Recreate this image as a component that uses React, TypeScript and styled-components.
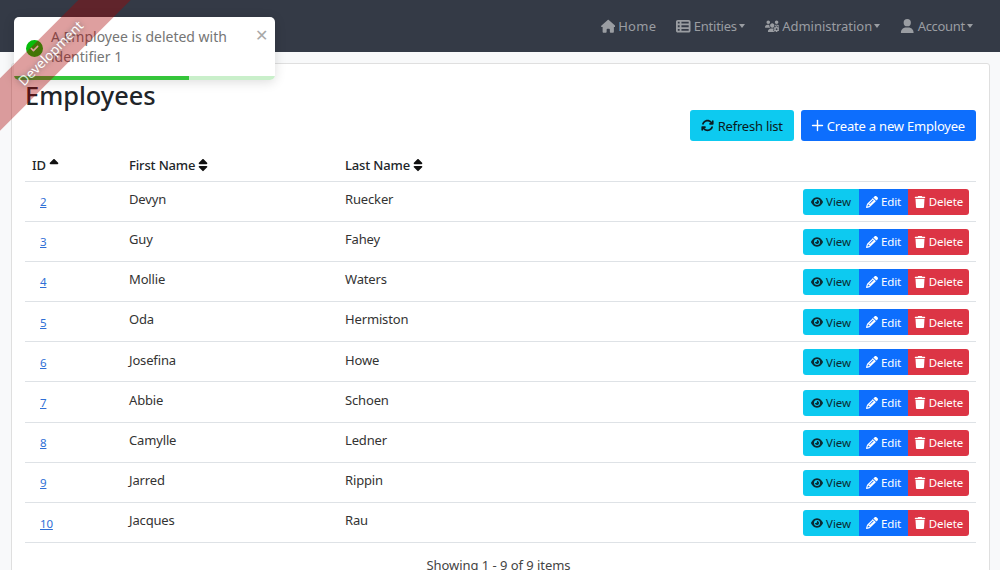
import React from 'react';
import styled, { createGlobalStyle } from 'styled-components';
import { FaHouse, FaTableList, FaUsersGear, FaUser, FaArrowsRotate, FaEye, FaPencil, FaTrash, FaSort, FaSortUp, FaCircleCheck } from 'react-icons/fa6';
import { Plus } from 'lucide-react';

const Global = createGlobalStyle`
  html, body { margin: 0; padding: 0; height: 570px; overflow: hidden; background: #f8f9fa; }
  body { font-family: "Noto Sans", "Open Sans", sans-serif; font-size: 13px; color: #212529; }
  * { box-sizing: border-box; }
`;
const Page = styled.div`position: relative; width: 1000px; height: 570px; overflow: hidden;`;
const Navbar = styled.nav`
  height: 52px; background: #343a46; display: flex; justify-content: flex-end; align-items: center;
  padding-right: 27px; gap: 20px;
`;
const NavItem = styled.span<{ $track?: number }>`
  display: flex; align-items: center; color: #9a9da2; font-size: 13px; letter-spacing: ${p => p.$track ?? 0}px;
  svg { margin-right: 3px; font-size: 14.5px; }
`;
const Caret = styled.i`
  display: inline-block; margin-left: 2px; border-top: 4px solid #9a9da2;
  border-left: 3.5px solid transparent; border-right: 3.5px solid transparent; border-bottom: 0;
`;
const Main = styled.main`padding: 11px 10px 0 11px;`;
const Card = styled.section`
  background: #fff; border: 1px solid #dfdfdf; border-radius: 3px; height: 560px; padding: 16px 13px 0 13px;
`;
const Header = styled.header`display: flex; justify-content: space-between; height: 61px;`;
const Title = styled.h2`margin: 0; font-size: 25.4px; font-weight: 500; line-height: 30px; color: #212529;`;
const Actions = styled.div`display: flex; gap: 7px; align-items: flex-end;`;
const Button = styled.button<{ $bg: string; $fg: string }>`
  height: 31px; border: 0; border-radius: 3px; padding: 0 11px; background: ${p => p.$bg}; color: ${p => p.$fg};
  display: flex; align-items: center; gap: 4px; font: inherit; font-size: 13px; letter-spacing: -0.2px;
  svg { font-size: 13px; flex: none; }
`;
const PlusIcon = styled(Plus)`margin: 0 -3px;`;
const Table = styled.table`
  width: 951px; margin-top: 8px; border-collapse: collapse; table-layout: fixed;
`;
const Th = styled.th<{ $w?: number }>`
  width: ${p => (p.$w ? `${p.$w}px` : 'auto')}; height: 32px; padding: 0 7px; text-align: left; font-weight: 500; font-size: 13px;
  letter-spacing: -0.15px; border-bottom: 1px solid #dee2e6; color: #212529;
  svg { font-size: 14px; vertical-align: -2px; margin-left: 1px; color: #111; }
`;
const Td = styled.td`height: 40.2px; padding: 0 7px 4.6px; border-bottom: 1px solid #dee2e6; font-size: 13px; letter-spacing: -0.15px; color: #333;`;
const IdCell = styled(Td)`padding: 0 0 0 15px;`;
const Link = styled.a`color: #2f6fd6; text-decoration: underline; font-size: 11.5px;`;
const ActionCell = styled(Td)`padding: 1px 7px 0 0;`;
const Group = styled.div`display: flex; justify-content: flex-end;`;
const Small = styled.button<{ $bg: string; $fg: string; $w: number }>`
  width: ${p => p.$w}px; height: 26px; border: 0; padding: 0; background: ${p => p.$bg}; color: ${p => p.$fg};
  display: flex; align-items: center; justify-content: center; gap: 3px; font: inherit; font-size: 11.5px; letter-spacing: -0.1px;
  &:first-child { border-radius: 3px 0 0 3px; }
  &:last-child { border-radius: 0 3px 3px 0; }
  svg { font-size: 12px; flex: none; }
`;
const Footer = styled.div`text-align: center; margin-top: 13px; padding-right: 4px; font-size: 13px; letter-spacing: -0.05px; color: #444;`;
const Toast = styled.div`
  position: absolute; left: 14px; top: 17px; width: 261px; height: 63px; background: #fff; border-radius: 5px;
  box-shadow: 0 2px 12px rgba(0,0,0,.14); overflow: hidden; display: flex; align-items: center; padding: 0 0 4px 12px; gap: 8px;
`;
const ToastIcon = styled(FaCircleCheck)`color: #07bc0c; font-size: 17px; flex: none; margin-top: 3px;`;
const ToastText = styled.div`color: #757575; font-size: 14px; line-height: 20px; width: 195px;`;
const Close = styled.span`position: absolute; right: 7px; top: 8px; color: #a8a8a8; font-size: 16px; line-height: 20px;`;
const Track = styled.div`position: absolute; left: 0; right: 0; bottom: 0; height: 4px; background: #c9efca;`;
const Progress = styled.div`height: 4px; background: #35c53a;`;
const Ribbon = styled.div`
  position: absolute; left: -54px; top: 35px; width: 210px; transform: rotate(-45deg); background: rgba(170,0,0,.5);
  opacity: .75; z-index: 10; text-align: center; padding: 10px 0; color: #fff; font-size: 13.5px; line-height: 17px;
  text-shadow: 0 0 5px #444; pointer-events: none;
`;

const rows: [number, string, string][] = [
  [2, 'Devyn', 'Ruecker'], [3, 'Guy', 'Fahey'], [4, 'Mollie', 'Waters'], [5, 'Oda', 'Hermiston'], [6, 'Josefina', 'Howe'],
  [7, 'Abbie', 'Schoen'], [8, 'Camylle', 'Ledner'], [9, 'Jarred', 'Rippin'], [10, 'Jacques', 'Rau'],
];

export default function App() {
  return (
    <Page>
      <Global />
      <Navbar>
        <NavItem $track={0.3}><FaHouse />Home</NavItem>
        <NavItem $track={-0.25}><FaTableList />Entities<Caret /></NavItem>
        <NavItem $track={-0.04}><FaUsersGear />Administration<Caret /></NavItem>
        <NavItem $track={-0.3}><FaUser />Account<Caret /></NavItem>
      </Navbar>
      <Main>
        <Card>
          <Header>
            <Title>Employees</Title>
            <Actions>
              <Button $bg="#0dcaf0" $fg="#0b1a20"><FaArrowsRotate />Refresh list</Button>
              <Button $bg="#0d6efd" $fg="#fff"><PlusIcon size={17} strokeWidth={2} />Create a new Employee</Button>
            </Actions>
          </Header>
          <Table>
            <thead>
              <tr>
                <Th $w={97}>ID<FaSortUp /></Th>
                <Th $w={216}>First Name<FaSort /></Th>
                <Th $w={300}>Last Name<FaSort /></Th>
                <Th />
              </tr>
            </thead>
            <tbody>
              {rows.map(([id, first, last]) => (
                <tr key={id}>
                  <IdCell><Link href="#">{id}</Link></IdCell>
                  <Td>{first}</Td>
                  <Td>{last}</Td>
                  <ActionCell>
                    <Group>
                      <Small $bg="#0dcaf0" $fg="#0b2a33" $w={56}><FaEye />View</Small>
                      <Small $bg="#0d6efd" $fg="#fff" $w={49}><FaPencil />Edit</Small>
                      <Small $bg="#dc3545" $fg="#fff" $w={61}><FaTrash />Delete</Small>
                    </Group>
                  </ActionCell>
                </tr>
              ))}
            </tbody>
          </Table>
          <Footer>Showing 1 - 9 of 9 items</Footer>
        </Card>
      </Main>
      <Toast>
        <ToastIcon />
        <ToastText>A Employee is deleted with identifier 1</ToastText>
        <Close>✕</Close>
        <Track><Progress style={{ width: `${(175 / 261) * 100}%` }} /></Track>
      </Toast>
      <Ribbon>Development</Ribbon>
    </Page>
  );
}
